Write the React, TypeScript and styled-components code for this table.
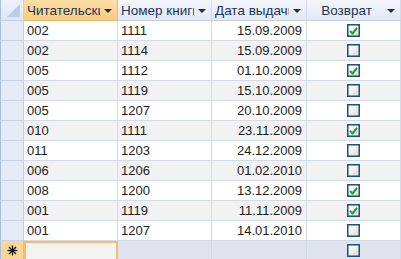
import React from "react";
import styled, { createGlobalStyle, css } from "styled-components";

const Global = createGlobalStyle`
  html, body { margin: 0; padding: 0; background: #ffffff; overflow: hidden; }
  body { font-family: "Liberation Sans", Arial, sans-serif; }
`;

const Sheet = styled.div`
  width: 401px;
  height: 259px;
  overflow: hidden;
  display: grid;
  grid-template-columns: 24px 94px 94px 95px 94px;
  grid-auto-rows: 20px;
  grid-template-rows: 21px;
  font-size: 13px;
  color: #1c1c1c;
`;

const Corner = styled.div`
  box-sizing: border-box;
  border-right: 1px solid #c3cfe2;
  border-bottom: 1px solid #c3cfe2;
  border-left: 1px solid #a9bfdf;
  background: linear-gradient(#eef3fa, #dde6f3);
  display: flex;
  align-items: flex-end;
  justify-content: flex-end;
  padding: 0 2px 3px 0;
`;

const HeaderCell = styled.div<{ $active?: boolean }>`
  box-sizing: border-box;
  border-right: 1px solid #d3dbe8;
  border-bottom: 1px solid #c5d0e2;
  background: linear-gradient(#f3f6fb, #e2e9f4);
  color: #1e3456;
  font-size: 13.5px;
  display: flex;
  align-items: center;
  padding: 0 5px 0 3px;
  gap: 4px;
  overflow: hidden;
  white-space: nowrap;
  ${(p) =>
    p.$active &&
    css`
      background: linear-gradient(#fcdfa6, #f8cc83);
      border-right-color: #e9bd78;
      border-bottom-color: #e8b868;
    `}
`;

const HeaderLabel = styled.span<{ $center?: boolean }>`
  flex: 1;
  overflow: hidden;
  text-overflow: clip;
  ${(p) => p.$center && css`text-align: center;`}
`;

const Arrow = styled.span`
  flex: none;
  width: 0;
  height: 0;
  border-left: 4px solid transparent;
  border-right: 4px solid transparent;
  border-top: 4px solid #2b2b2b;
  margin-top: 1px;
`;

const Selector = styled.div<{ $current?: boolean }>`
  box-sizing: border-box;
  border-left: 1px solid #a9bfdf;
  border-right: 1px solid #c3cfe2;
  border-bottom: 1px solid #c8d4e6;
  background: #e4eaf6;
  display: flex;
  align-items: center;
  justify-content: center;
  ${(p) =>
    p.$current &&
    css`
      background: #fad59a;
      border-right-color: #f2b866;
    `}
`;

const Cell = styled.div<{ $alt?: boolean; $right?: boolean; $center?: boolean; $newRow?: boolean; $focus?: boolean }>`
  box-sizing: border-box;
  border-right: 1px solid #d3dbe8;
  border-bottom: 1px solid #d3dbe8;
  background: ${(p) => (p.$alt ? "#f2f2f2" : "#ffffff")};
  display: flex;
  align-items: center;
  padding: 0 4px 0 3px;
  white-space: nowrap;
  overflow: hidden;
  justify-content: ${(p) => (p.$right ? "flex-end" : p.$center ? "center" : "flex-start")};
  ${(p) => p.$newRow && css`background: #dfe3ee;`}
  ${(p) =>
    p.$focus &&
    css`
      background: #f3f3f3;
      border: 2px solid #f7bb6c;
      border-bottom: none;
    `}
`;

const Box = styled.span`
  box-sizing: border-box;
  width: 13px;
  height: 13px;
  border: 1px solid #1d4f7f;
  box-shadow: inset 0 0 0 0.5px #1d4f7f;
  background: linear-gradient(135deg, #ffffff 0%, #f1f1ef 45%, #d6d6d2 100%);
  display: flex;
  align-items: center;
  justify-content: center;
`;

const CornerMark = () => (
  <svg width="14" height="13" viewBox="0 0 14 13">
    <polygon points="13,0 13,13 0,13" fill="#bccbe0" />
  </svg>
);

const Check = () => (
  <svg width="9" height="8" viewBox="0 0 9 8">
    <path d="M1 4 L3.5 6.5 L8 1" fill="none" stroke="#21a12a" strokeWidth="2" />
  </svg>
);

const Star = () => (
  <svg width="11" height="11" viewBox="0 0 11 11">
    <g stroke="#111" strokeWidth="1.3">
      <line x1="5.5" y1="0.5" x2="5.5" y2="10.5" />
      <line x1="0.5" y1="5.5" x2="10.5" y2="5.5" />
      <line x1="2" y1="2" x2="9" y2="9" />
      <line x1="9" y1="2" x2="2" y2="9" />
    </g>
  </svg>
);

type Row = { reader: string; book: string; date: string; returned: boolean };

const rows: Row[] = [
  { reader: "002", book: "1111", date: "15.09.2009", returned: true },
  { reader: "002", book: "1114", date: "15.09.2009", returned: false },
  { reader: "005", book: "1112", date: "01.10.2009", returned: true },
  { reader: "005", book: "1119", date: "15.10.2009", returned: false },
  { reader: "005", book: "1207", date: "20.10.2009", returned: false },
  { reader: "010", book: "1111", date: "23.11.2009", returned: true },
  { reader: "011", book: "1203", date: "24.12.2009", returned: false },
  { reader: "006", book: "1206", date: "01.02.2010", returned: false },
  { reader: "008", book: "1200", date: "13.12.2009", returned: true },
  { reader: "001", book: "1119", date: "11.11.2009", returned: true },
  { reader: "001", book: "1207", date: "14.01.2010", returned: false },
];

export default function App() {
  return (
    <>
      <Global />
      <Sheet>
        <Corner>
          <CornerMark />
        </Corner>
        <HeaderCell $active>
          <HeaderLabel>Читательский</HeaderLabel>
          <Arrow />
        </HeaderCell>
        <HeaderCell>
          <HeaderLabel>Номер книги</HeaderLabel>
          <Arrow />
        </HeaderCell>
        <HeaderCell>
          <HeaderLabel>Дата выдачи</HeaderLabel>
          <Arrow />
        </HeaderCell>
        <HeaderCell>
          <HeaderLabel $center>Возврат</HeaderLabel>
          <Arrow />
        </HeaderCell>

        {rows.map((r, i) => {
          const alt = i % 2 === 1;
          return (
            <React.Fragment key={i}>
              <Selector />
              <Cell $alt={alt}>{r.reader}</Cell>
              <Cell $alt={alt}>{r.book}</Cell>
              <Cell $alt={alt} $right>
                {r.date}
              </Cell>
              <Cell $alt={alt} $center>
                <Box>{r.returned && <Check />}</Box>
              </Cell>
            </React.Fragment>
          );
        })}

        <Selector $current>
          <Star />
        </Selector>
        <Cell $focus />
        <Cell $newRow />
        <Cell $newRow />
        <Cell $newRow $center>
          <Box />
        </Cell>
      </Sheet>
    </>
  );
}
